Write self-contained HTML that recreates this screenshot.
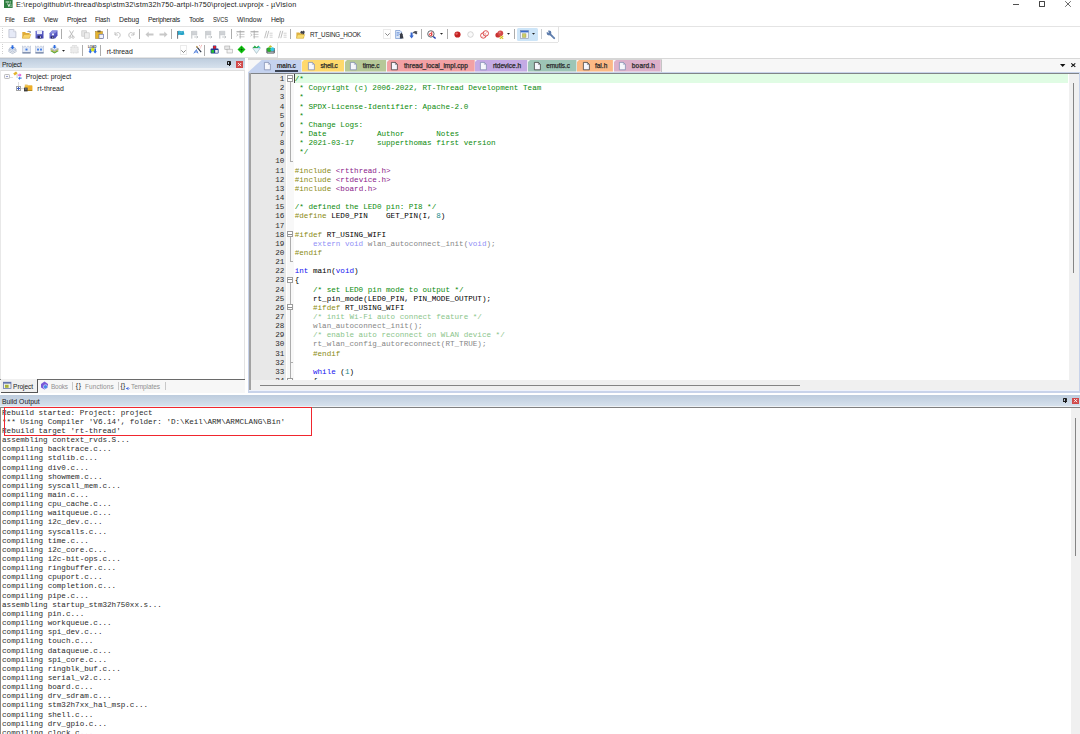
<!DOCTYPE html><html><head><meta charset="utf-8"><title>project.uvprojx - µVision</title><style>
html,body{margin:0;padding:0;}
body{width:1080px;height:734px;overflow:hidden;background:#fff;position:relative;font-family:"Liberation Sans",sans-serif;color:#000;}
.a{position:absolute;}
.ui{position:absolute;font-size:6.9px;line-height:9px;white-space:pre;color:#111;}
.mono{position:absolute;font-family:"Liberation Mono",monospace;font-size:7.619px;line-height:9.1520px;height:9.1520px;white-space:pre;}
.ln{position:absolute;font-family:"Liberation Mono",monospace;font-size:7.619px;line-height:9.1520px;height:9.1520px;color:#2a2a2a;text-align:right;width:30px;}
.c{color:#0b8a0b}.p{color:#8a8a12}.s{color:#8a1a8a}.k{color:#1414f0}.n{color:#148a8a}.d{opacity:.5}
.hdr{position:absolute;background:linear-gradient(#bdccdd,#d6e1ed);}
.tab{position:absolute;top:60px;height:12px;}
.tabt{position:absolute;font-size:6.6px;line-height:9px;top:61.5px;white-space:pre;color:#222;font-weight:bold;letter-spacing:-0.1px}
svg{position:absolute;overflow:visible}
</style></head><body>
<svg style="left:4.4px;top:-0.5px" width="8.6" height="8" viewBox="0 0 8.6 8"><rect width="8.6" height="8" fill="#2f7f41"/><path d="M1.6 1.6h3.4v1h-3.4z" fill="#dcecdc"/><path d="M5.6 1.4h1.4v1.2h-1.4z" fill="#cfe4cf"/><path d="M3.6 3.6l1.3 3l1.2-3" fill="none" stroke="#f2f8f2" stroke-width="0.9"/><path d="M6.4 5h1.3M6.4 6.6h1.3" stroke="#e0eee0" stroke-width="0.7"/></svg>
<div class="ui" style="left:16.00px;top:0.10px;font-size:7.30px;letter-spacing:0.202px;color:#1a1a1a;">E:\repo\github\rt-thread\bsp\stm32\stm32h750-artpi-h750\project.uvprojx - µVision</div>
<div class="a" style="left:1013.00px;top:4.10px;width:6.00px;height:0.80px;background:#505050;"></div>
<div class="a" style="left:1038.9px;top:1.1px;width:5.9px;height:5.8px;border:0.8px solid #444;box-sizing:border-box;border-radius:0.4px"></div>
<svg style="left:1065px;top:1.1px" width="6" height="6" viewBox="0 0 6 6"><path d="M0.2 0.2L5.8 5.8M5.8 0.2L0.2 5.8" stroke="#444" stroke-width="0.8" fill="none"/></svg>
<div class="ui" style="left:4.80px;top:14.90px;font-size:6.90px;letter-spacing:-0.220px;color:#1a1a1a;transform:scaleX(0.9275);transform-origin:0 0;">File</div>
<div class="ui" style="left:23.60px;top:14.90px;font-size:6.90px;letter-spacing:-0.163px;color:#1a1a1a;">Edit</div>
<div class="ui" style="left:43.60px;top:14.90px;font-size:6.90px;letter-spacing:-0.144px;color:#1a1a1a;">View</div>
<div class="ui" style="left:66.70px;top:14.90px;font-size:6.90px;letter-spacing:-0.220px;color:#1a1a1a;transform:scaleX(0.9774);transform-origin:0 0;">Project</div>
<div class="ui" style="left:95.00px;top:14.90px;font-size:6.90px;letter-spacing:-0.220px;color:#1a1a1a;transform:scaleX(0.9379);transform-origin:0 0;">Flash</div>
<div class="ui" style="left:119.00px;top:14.90px;font-size:6.90px;letter-spacing:-0.083px;color:#1a1a1a;">Debug</div>
<div class="ui" style="left:147.80px;top:14.90px;font-size:6.90px;letter-spacing:-0.220px;color:#1a1a1a;transform:scaleX(0.9847);transform-origin:0 0;">Peripherals</div>
<div class="ui" style="left:189.00px;top:14.90px;font-size:6.90px;letter-spacing:-0.220px;color:#1a1a1a;transform:scaleX(0.9850);transform-origin:0 0;">Tools</div>
<div class="ui" style="left:213.00px;top:14.90px;font-size:6.90px;letter-spacing:-0.220px;color:#1a1a1a;transform:scaleX(0.8274);transform-origin:0 0;">SVCS</div>
<div class="ui" style="left:237.10px;top:14.90px;font-size:6.90px;letter-spacing:0.012px;color:#1a1a1a;">Window</div>
<div class="ui" style="left:270.80px;top:14.90px;font-size:6.90px;letter-spacing:-0.220px;color:#1a1a1a;transform:scaleX(0.9903);transform-origin:0 0;">Help</div>
<div class="a" style="left:0.00px;top:25.80px;width:1080.00px;height:1.00px;background:#e4e4e4;"></div>
<div class="a" style="left:0.00px;top:41.50px;width:558.00px;height:1.00px;background:#e4e4e4;"></div>
<div class="a" style="left:557.50px;top:26.00px;width:1.00px;height:16.00px;background:#e2e2e2;"></div>
<div class="a" style="left:0.00px;top:57.30px;width:277.50px;height:1.00px;background:#e4e4e4;"></div>
<div class="a" style="left:276.80px;top:42.00px;width:1.00px;height:16.00px;background:#e0e0e0;"></div>
<div class="a" style="left:2.10px;top:28.00px;width:0.80px;height:0.80px;background:#cfcfcf;"></div>
<div class="a" style="left:2.10px;top:30.20px;width:0.80px;height:0.80px;background:#cfcfcf;"></div>
<div class="a" style="left:2.10px;top:32.40px;width:0.80px;height:0.80px;background:#cfcfcf;"></div>
<div class="a" style="left:2.10px;top:34.60px;width:0.80px;height:0.80px;background:#cfcfcf;"></div>
<div class="a" style="left:2.10px;top:36.80px;width:0.80px;height:0.80px;background:#cfcfcf;"></div>
<div class="a" style="left:2.10px;top:44.00px;width:0.80px;height:0.80px;background:#cfcfcf;"></div>
<div class="a" style="left:2.10px;top:46.20px;width:0.80px;height:0.80px;background:#cfcfcf;"></div>
<div class="a" style="left:2.10px;top:48.40px;width:0.80px;height:0.80px;background:#cfcfcf;"></div>
<div class="a" style="left:2.10px;top:50.60px;width:0.80px;height:0.80px;background:#cfcfcf;"></div>
<div class="a" style="left:2.10px;top:52.80px;width:0.80px;height:0.80px;background:#cfcfcf;"></div>
<svg style="left:7.5px;top:29.4px" width="9" height="9" viewBox="0 0 9 9"><path d="M0.9 0.5h4.8l2.2 2.2v5.9h-7z" fill="#e6eaf7" stroke="#b4b9c8" stroke-width="0.7"/><path d="M5.7 0.5v2.2h2.2" fill="#f8f9fd" stroke="#b4b9c8" stroke-width="0.5"/></svg>
<svg style="left:21.5px;top:29.7px" width="9" height="9" viewBox="0 0 9 9"><path d="M0.3 2h2.8l0.9 0.9h3.6v5.3h-7.3z" fill="#e2ac38"/><path d="M1.9 4.4h7l-1.5 3.9h-7.1z" fill="#f8d468" stroke="#c8982a" stroke-width="0.4"/><path d="M5.2 1.6c0.8-1.2 2.4-1.3 3.2-0.2l0.6-0.5v1.9h-1.9l0.6-0.6c-0.5-0.6-1.3-0.5-1.7 0z" fill="#7c8cb0"/></svg>
<svg style="left:34.9px;top:29.7px" width="9" height="9" viewBox="0 0 9 9"><defs><linearGradient id="sv" x1="0" y1="0" x2="1" y2="1"><stop offset="0" stop-color="#8084dc"/><stop offset="1" stop-color="#3c3cae"/></linearGradient></defs><rect x="0.5" y="0.7" width="8" height="7.8" rx="0.5" fill="url(#sv)"/><rect x="2" y="1" width="5" height="3.1" fill="#eceefa"/><rect x="2.6" y="5.7" width="3.8" height="2.8" fill="#24245a"/><rect x="4.9" y="6.2" width="1" height="1.9" fill="#c8c8e0"/></svg>
<svg style="left:48.5px;top:29.7px" width="9" height="9" viewBox="0 0 9 9"><path d="M0.5 3.2l2.6-2.6h5.4v5l-2.4 2.9h-5.6z" fill="url(#sv)"/><path d="M0.5 3.2l2.6-2.6h5.4l-2.4 2.6z" fill="#8a8ee0"/><path d="M3 3.6h2v1.6h-2z" fill="#eceefa"/><rect x="1.8" y="6.3" width="3" height="2.2" fill="#24245a"/><rect x="3.4" y="6.7" width="0.8" height="1.5" fill="#c8c8e0"/></svg>
<div class="a" style="left:61.00px;top:28.70px;width:0.90px;height:10.80px;background:#acacac;"></div>
<svg style="left:66.5px;top:29.7px" width="9" height="9" viewBox="0 0 9 9"><path d="M2.5 0.5l3.5 6M6.5 0.5l-3.5 6" stroke="#b8b8b8" stroke-width="0.9" fill="none"/><circle cx="2.9" cy="7.2" r="1.1" fill="none" stroke="#b8b8b8" stroke-width="0.8"/><circle cx="6.1" cy="7.2" r="1.1" fill="none" stroke="#b8b8b8" stroke-width="0.8"/></svg>
<svg style="left:80.5px;top:29.7px" width="9" height="9" viewBox="0 0 9 9"><rect x="0.8" y="0.8" width="4.6" height="5.4" fill="#e6e6e6" stroke="#c0c0c0" stroke-width="0.6"/><rect x="3.6" y="2.8" width="4.6" height="5.4" fill="#eeeeee" stroke="#c0c0c0" stroke-width="0.6"/></svg>
<svg style="left:94.5px;top:29.7px" width="9" height="9" viewBox="0 0 9 9"><rect x="0.6" y="1.5" width="6.8" height="7" fill="#e6b42e" stroke="#a87c14" stroke-width="0.5"/><rect x="2.4" y="0.5" width="3.2" height="1.8" fill="#6a5c40"/><rect x="4" y="4.2" width="4.6" height="4.4" fill="#f0f2fa" stroke="#5060a0" stroke-width="0.6"/></svg>
<div class="a" style="left:107.30px;top:28.70px;width:0.90px;height:10.80px;background:#acacac;"></div>
<svg style="left:113.0px;top:29.7px" width="9" height="9" viewBox="0 0 9 9"><path d="M2 2v3h3" fill="none" stroke="#bdbdbd" stroke-width="0.9"/><path d="M2.2 4.8c1-3 5-3 5 0.2c0 1.6-1 2.6-2.2 3" fill="none" stroke="#bdbdbd" stroke-width="0.9"/></svg>
<svg style="left:126.5px;top:29.7px" width="9" height="9" viewBox="0 0 9 9"><path d="M7 2v3h-3" fill="none" stroke="#bdbdbd" stroke-width="0.9"/><path d="M6.8 4.8c-1-3-5-3-5 0.2c0 1.6 1 2.6 2.2 3" fill="none" stroke="#bdbdbd" stroke-width="0.9"/></svg>
<div class="a" style="left:139.30px;top:28.70px;width:0.90px;height:10.80px;background:#acacac;"></div>
<svg style="left:145.0px;top:29.7px" width="9" height="9" viewBox="0 0 9 9"><path d="M0.5 4.5l3.2-3v1.9h4.8v2.2h-4.8v1.9z" fill="#c8c8c8"/></svg>
<svg style="left:158.5px;top:29.7px" width="9" height="9" viewBox="0 0 9 9"><path d="M8.5 4.5l-3.2-3v1.9h-4.8v2.2h4.8v1.9z" fill="#c8c8c8"/></svg>
<div class="a" style="left:171.30px;top:28.70px;width:0.90px;height:10.80px;background:#acacac;"></div>
<svg style="left:176.4px;top:29.7px" width="9" height="9" viewBox="0 0 9 9"><path d="M1.6 1v7.8" stroke="#5a6068" stroke-width="0.9"/><path d="M2 1.2c1.6-1.4 3 0.8 5.6-0.4l0.8 3.8c-2.6 1.4-4-1-6.4 0.6z" fill="#28a4c8"/><path d="M3 2.2c1.2-0.6 2 0.4 3.4 0" stroke="#8ad4e8" stroke-width="0.6" fill="none"/></svg>
<svg style="left:190.4px;top:29.7px" width="9" height="9" viewBox="0 0 9 9"><path d="M1.8 1v7.6" stroke="#b4b8bc" stroke-width="0.9"/><path d="M2.3 1.2h4.6v3.8h-4.6z" fill="#d0d3d6" stroke="#b8bcc0" stroke-width="0.4"/><path d="M4.2 7h3.6M6.6 5.8l1.4 1.2l-1.4 1.2" stroke="#b0b4b8" stroke-width="0.7" fill="none"/></svg>
<svg style="left:204.4px;top:29.7px" width="9" height="9" viewBox="0 0 9 9"><path d="M1.8 1v7.6" stroke="#b4b8bc" stroke-width="0.9"/><path d="M2.3 1.2h4.6v3.8h-4.6z" fill="#d0d3d6" stroke="#b8bcc0" stroke-width="0.4"/><path d="M4.2 7h3.6M6.6 5.8l1.4 1.2l-1.4 1.2" stroke="#b0b4b8" stroke-width="0.7" fill="none"/></svg>
<svg style="left:217.9px;top:29.7px" width="9" height="9" viewBox="0 0 9 9"><path d="M1.8 1v7.6" stroke="#b4b8bc" stroke-width="0.9"/><path d="M2.3 1.2h4.6v3.8h-4.6z" fill="#d0d3d6" stroke="#b8bcc0" stroke-width="0.4"/><path d="M4.2 7h3.6M6.6 5.8l1.4 1.2l-1.4 1.2" stroke="#b0b4b8" stroke-width="0.7" fill="none"/></svg>
<div class="a" style="left:230.50px;top:28.70px;width:0.90px;height:10.80px;background:#acacac;"></div>
<svg style="left:236.0px;top:29.7px" width="9" height="9" viewBox="0 0 9 9"><path d="M0.5 1.8h8" stroke="#9c9c9c" stroke-width="1"/><path d="M3.4 4.4h5.1M3.4 6.8h5.1" stroke="#bdbdbd" stroke-width="0.8"/><path d="M0.4 3.6l1.8 1.3l-1.8 1.3" stroke="#b4b4b4" stroke-width="0.7" fill="none"/><path d="M4.2 0.4v8.2" stroke="#a4a4a4" stroke-width="0.8"/></svg>
<svg style="left:250.0px;top:29.7px" width="9" height="9" viewBox="0 0 9 9"><path d="M0.5 1.8h8" stroke="#9c9c9c" stroke-width="1"/><path d="M3.4 4.4h5.1M3.4 6.8h5.1" stroke="#bdbdbd" stroke-width="0.8"/><path d="M0.4 3.6l1.8 1.3l-1.8 1.3" stroke="#b4b4b4" stroke-width="0.7" fill="none"/><path d="M4.2 0.4v8.2" stroke="#a4a4a4" stroke-width="0.8"/></svg>
<svg style="left:264.0px;top:29.7px" width="9" height="9" viewBox="0 0 9 9"><path d="M0.6 8.2l2-7.4M2.8 8.2l2-7.4" stroke="#aeaeae" stroke-width="0.8"/><path d="M5.6 3.2h3M5.6 5.2h3M5.6 7.2h3" stroke="#c0c0c0" stroke-width="0.7"/></svg>
<svg style="left:278.0px;top:29.7px" width="9" height="9" viewBox="0 0 9 9"><path d="M0.6 8.2l2-7.4M2.8 8.2l2-7.4" stroke="#aeaeae" stroke-width="0.8"/><path d="M5.6 3.2h3M5.6 5.2h3M5.6 7.2h3" stroke="#c0c0c0" stroke-width="0.7"/></svg>
<div class="a" style="left:290.30px;top:28.70px;width:0.90px;height:10.80px;background:#acacac;"></div>
<svg style="left:295.5px;top:29.7px" width="9" height="9" viewBox="0 0 9 9"><path d="M0.4 2.4h2.8l0.9 0.9h3.9v5h-7.6z" fill="#e0b040"/><path d="M1.6 4.6h7.2l-1.4 3.7h-7z" fill="#f8dc70" stroke="#c8a030" stroke-width="0.4"/><path d="M4.2 2.6l1-1.8l1.2 0.8l1-1.2l1.4 1.4l-0.8 2.4h-1.4l-0.4-1.2l-1 1z" fill="#40404a"/></svg>
<div class="ui" style="left:310.00px;top:30.00px;font-size:6.50px;letter-spacing:-0.220px;color:#1a1a1a;transform:scaleX(0.9647);transform-origin:0 0;">RT_USING_HOOK</div>
<svg style="left:384.5px;top:32.5px" width="5" height="3" viewBox="0 0 5 3"><path d="M0.3 0.3l2.2 2.2l2.2-2.2" fill="none" stroke="#555" stroke-width="0.7"/></svg>
<div class="a" style="left:383.40px;top:28.80px;width:7.40px;height:10.40px;background:transparent;border:0.6px solid #ebebeb;box-sizing:border-box"></div>
<svg style="left:394.8px;top:29.7px" width="9" height="9" viewBox="0 0 9 9"><path d="M0.6 0.5h4.4l1.6 1.6v6.4h-6z" fill="#dce8fa" stroke="#5c84c8" stroke-width="0.6"/><path d="M1.6 2.6h3M1.6 4h3M1.6 5.4h2" stroke="#4878d0" stroke-width="0.6"/><path d="M5 4.2l1.4-1.6l1.2 1.6l0.9 4.2h-3.6z" fill="#3a3e48"/></svg>
<svg style="left:408.5px;top:29.7px" width="9" height="9" viewBox="0 0 9 9"><path d="M1.6 2.6h2v3h1.2l-2.2 2.8l-2.2-2.8h1.2z" fill="#3868d0"/><path d="M3.6 3.4c0.4-2.4 3.4-3.4 5-1.6l-0.8 0.8l0.6 0.6l-1.2 1.4l-1.2-1.2c-0.8-0.4-1.6-0.2-2.4 0z" fill="#4a4e5a"/></svg>
<div class="a" style="left:421.30px;top:28.70px;width:0.90px;height:10.80px;background:#acacac;"></div>
<svg style="left:427.0px;top:29.7px" width="9" height="9" viewBox="0 0 9 9"><path d="M6 6.2l2.6 2.4" stroke="#2038b0" stroke-width="1.4"/><circle cx="3.9" cy="3.9" r="3.2" fill="#fff" stroke="#505860" stroke-width="0.9"/><circle cx="3.5" cy="4.5" r="1.1" fill="none" stroke="#e01818" stroke-width="0.9"/><path d="M4.8 1.6v4.2" stroke="#e01818" stroke-width="0.9"/></svg>
<svg style="left:439.5px;top:33px" width="3" height="2" viewBox="0 0 3 2"><path d="M0 0h3l-1.5 1.8z" fill="#222"/></svg>
<div class="a" style="left:447.30px;top:28.70px;width:0.90px;height:10.80px;background:#acacac;"></div>
<svg style="left:452.8px;top:29.7px" width="9" height="9" viewBox="0 0 9 9"><circle cx="4.5" cy="4.5" r="3.1" fill="#c42222"/><circle cx="3.6" cy="3.6" r="1.2" fill="#e06464"/></svg>
<svg style="left:466.1px;top:29.7px" width="9" height="9" viewBox="0 0 9 9"><circle cx="4.5" cy="4.5" r="2.8" fill="#fafafa" stroke="#c4c4c4" stroke-width="0.7"/></svg>
<svg style="left:480.1px;top:29.7px" width="9" height="9" viewBox="0 0 9 9"><circle cx="3.3" cy="5.5" r="2.7" fill="#fff" stroke="#d42424" stroke-width="0.8"/><circle cx="5.8" cy="3.4" r="2.7" fill="#fff" fill-opacity="0.6" stroke="#d42424" stroke-width="0.8"/><path d="M2 7.4l5.4-5.8" stroke="#e89090" stroke-width="0.5"/></svg>
<svg style="left:494.5px;top:29.7px" width="9" height="9" viewBox="0 0 9 9"><circle cx="3" cy="5" r="2.6" fill="#c83030"/><circle cx="5.4" cy="3.2" r="2.8" fill="#d44a4a"/><circle cx="4.8" cy="2.6" r="1" fill="#e88080"/><path d="M4.8 5.8l3.4 3M8.2 5.8l-3.4 3" stroke="#d8c020" stroke-width="1.1"/></svg>
<svg style="left:507px;top:33px" width="3" height="2" viewBox="0 0 3 2"><path d="M0 0h3l-1.5 1.8z" fill="#222"/></svg>
<div class="a" style="left:514.30px;top:28.70px;width:0.90px;height:10.80px;background:#acacac;"></div>
<div class="a" style="left:517.00px;top:27.80px;width:21.30px;height:12.80px;background:#cde5f8;border-radius:1.5px"></div>
<svg style="left:520.1px;top:29.7px" width="9" height="9" viewBox="0 0 9 9"><rect x="0.5" y="0.6" width="8" height="7.8" fill="#f4f6fa" stroke="#8890a8" stroke-width="0.6"/><rect x="0.5" y="0.6" width="8" height="1.8" fill="#3a6cc8"/><rect x="2.4" y="3.8" width="3.6" height="3.6" fill="#cccc64" stroke="#8c9048" stroke-width="0.4"/></svg>
<svg style="left:532px;top:33px" width="3" height="2" viewBox="0 0 3 2"><path d="M0 0h3l-1.5 1.8z" fill="#222"/></svg>
<div class="a" style="left:540.60px;top:28.70px;width:0.90px;height:10.80px;background:#c8ccd0;"></div>
<svg style="left:545.7px;top:29.7px" width="9" height="9" viewBox="0 0 9 9"><path d="M8.2 8.2l-4.4-4.4" stroke="#5c7cac" stroke-width="1.9" stroke-linecap="round"/><circle cx="3" cy="3" r="2.4" fill="#5c7cac"/><path d="M3 3l-3.2-1.6l1.6-1.8z" fill="#fff"/><path d="M7 6.2l1.2 1.2" stroke="#a8bcd8" stroke-width="0.6"/></svg>
<svg style="left:7.7px;top:45.2px" width="9" height="9" viewBox="0 0 9 9"><path d="M0.4 5l4-2l4.2 2l-4.1 2.2z" fill="#dfe6f0" stroke="#8c9ab4" stroke-width="0.5"/><path d="M0.4 6.4l4.1 2.2l4.1-2.2" fill="none" stroke="#8c9ab4" stroke-width="0.6"/><path d="M1.2 3.4l3.2-1.6l3.4 1.6l-3.3 1.8z" fill="#f0f4fa" stroke="#98a6c0" stroke-width="0.5"/><path d="M3.6 0.2h1.8v2h1.2l-2.1 2.2l-2.1-2.2h1.2z" fill="#2c6ce0"/></svg>
<svg style="left:21.7px;top:45.2px" width="9" height="9" viewBox="0 0 9 9"><path d="M0.5 0.8l1.2 1.6l1.3-1.6l1.5 1.6l1.5-1.6l1.3 1.6l1.2-1.6v7.4h-8z" fill="#e4eaf4" stroke="#a8b4cc" stroke-width="0.5"/><rect x="0.5" y="7.2" width="8" height="1.2" fill="#7080a4"/><rect x="3.5" y="3.6" width="2" height="1.9" fill="#3a78e8"/></svg>
<svg style="left:35.1px;top:45.2px" width="9" height="9" viewBox="0 0 9 9"><path d="M0.5 0.8l1.2 1.6l1.3-1.6l1.5 1.6l1.5-1.6l1.3 1.6l1.2-1.6v7.4h-8z" fill="#e4eaf4" stroke="#a8b4cc" stroke-width="0.5"/><rect x="0.5" y="7.2" width="8" height="1.2" fill="#7080a4"/><rect x="2.1" y="3.6" width="1.8" height="1.9" fill="#3a78e8"/><rect x="5.1" y="3.6" width="1.8" height="1.9" fill="#3a78e8"/></svg>
<svg style="left:49.5px;top:45.2px" width="9" height="9" viewBox="0 0 9 9"><path d="M0.3 6l4.2-2.2l4.2 2.2l-4.2 2.6z" fill="#48a038"/><path d="M0.3 5l4.2-2.2l4.2 2.2l-4.2 2.6z" fill="#d8d038"/><path d="M0.3 4l4.2-2.2l4.2 2.2l-4.2 2.6z" fill="#b8c0c8" stroke="#7c8894" stroke-width="0.4"/><path d="M1.6 3l3-1.6l3 1.6l-3 1.8z" fill="#eef2f6"/><path d="M3.7 0h1.7v1.8h1.1l-1.95 2l-1.95-2h1.1z" fill="#2c6ce0"/></svg>
<svg style="left:61.5px;top:49.5px" width="3" height="2" viewBox="0 0 3 2"><path d="M0 0h3l-1.5 1.8z" fill="#222"/></svg>
<svg style="left:69.5px;top:45.2px" width="9" height="9" viewBox="0 0 9 9"><rect x="0.8" y="2" width="7.4" height="6" fill="#ececec" stroke="#c4c4c4" stroke-width="0.6" stroke-dasharray="1 0.6"/><path d="M2 0.8h5" stroke="#c4c4c4" stroke-width="0.7"/></svg>
<div class="a" style="left:82.00px;top:44.90px;width:0.90px;height:10.80px;background:#acacac;"></div>
<svg style="left:88.3px;top:45.4px" width="9.4" height="9" viewBox="0 0 9.4 9"><text x="0" y="2.6" style="font:bold 3.1px &quot;Liberation Sans&quot;,sans-serif;letter-spacing:-0.1px" fill="#3a3e48">LOAD</text><path d="M1.4 3.4h1.8v2.8h1l-1.9 2.4l-1.9-2.4h1z" fill="#2c6ce0"/><path d="M6.2 3.4h1.8v2.8h1l-1.9 2.4l-1.9-2.4h1z" fill="#2c6ce0"/><circle cx="4.7" cy="4.6" r="1.9" fill="#d4e01c"/></svg>
<div class="a" style="left:100.30px;top:44.90px;width:0.90px;height:10.80px;background:#acacac;"></div>
<div class="ui" style="left:106.80px;top:46.70px;font-size:6.80px;letter-spacing:0.025px;color:#1a1a1a;">rt-thread</div>
<div class="a" style="left:180.30px;top:44.60px;width:7.20px;height:10.60px;background:transparent;border:0.6px solid #ebebeb;box-sizing:border-box"></div>
<svg style="left:181px;top:49.5px" width="5" height="3" viewBox="0 0 5 3"><path d="M0.3 0.3l2.2 2.2l2.2-2.2" fill="none" stroke="#555" stroke-width="0.7"/></svg>
<svg style="left:192.5px;top:45.4px" width="9" height="9" viewBox="0 0 9 9"><path d="M3.6 1.6l4.6 5.6" stroke="#2c3444" stroke-width="1.1"/><path d="M3.4 1.2l1.2 1.4" stroke="#c8a050" stroke-width="1.2"/><path d="M3.6 4.4l-2.8 4M3.4 5l1.6 3.4M1.6 7h3" stroke="#4878d8" stroke-width="0.9" fill="none"/><path d="M6 0.6h0.7M7.6 1.8h0.7M6.8 3h0.6M8.2 0.4h0.6" stroke="#e04848" stroke-width="0.7"/></svg>
<div class="a" style="left:204.30px;top:44.90px;width:0.90px;height:10.80px;background:#acacac;"></div>
<svg style="left:210.3px;top:45.4px" width="9" height="9" viewBox="0 0 9 9"><rect x="0.6" y="3.6" width="8" height="4.9" rx="0.8" fill="#203c90"/><rect x="2.9" y="0.4" width="3.4" height="3.6" rx="0.5" fill="#203c90"/><rect x="3.4" y="1" width="2.4" height="2.6" fill="#e81c24"/><rect x="1.4" y="5" width="2.6" height="2.8" fill="#28c030"/><rect x="5.2" y="5" width="2.6" height="2.8" fill="#f0f0f4"/></svg>
<svg style="left:224.0px;top:45.2px" width="9" height="9" viewBox="0 0 9 9"><rect x="0.8" y="1" width="5" height="3.6" fill="#e8e8e8" stroke="#a8a8a8" stroke-width="0.6"/><rect x="3" y="4.2" width="5.4" height="3.8" fill="#f4f4f4" stroke="#a8a8a8" stroke-width="0.6"/></svg>
<svg style="left:237.3px;top:45.4px" width="9" height="9" viewBox="0 0 9 9"><path d="M4.5 0.5l4 4l-4 4l-4-4z" fill="#10c010"/><path d="M4.5 2.2v4.6M2.2 4.5h4.6" stroke="#087008" stroke-width="0.7" stroke-dasharray="0.8 0.6"/><circle cx="4.5" cy="4.5" r="0.8" fill="#065806"/></svg>
<svg style="left:251.8px;top:45.4px" width="9" height="9" viewBox="0 0 9 9"><path d="M0.6 2.9h7.8l-3.9 5.6z" fill="#dff4fa" stroke="#8ca0a8" stroke-width="0.5"/><path d="M0.6 2.9l2.2-2.3l1.7 1.6l1.9-1.6l2 2.3z" fill="#28a848"/><path d="M5.6 2.4l1.4-1.2l1.4 1.7h-2z" fill="#48c8e0"/></svg>
<svg style="left:265.9px;top:45.4px" width="9" height="9" viewBox="0 0 9 9"><rect x="0.4" y="3" width="8.4" height="5.4" rx="0.8" fill="#4a5058"/><rect x="1.4" y="6.6" width="6.4" height="1" fill="#d8dce0"/><circle cx="3.2" cy="4.6" r="2.3" fill="#28b028"/><circle cx="6.4" cy="4.2" r="2" fill="#38c8e0"/><path d="M2.6 1.6l1.8-1.4l1.8 1.4l-1.8 1z" fill="#c8c030"/></svg>
<div class="hdr" style="left:0;top:58.2px;width:244.7px;height:10px"></div>
<div class="a" style="left:0.00px;top:57.90px;width:244.70px;height:0.60px;background:#b8c3d0;"></div>
<div class="ui" style="left:1.90px;top:59.50px;font-size:6.80px;letter-spacing:-0.220px;color:#1a1a1a;transform:scaleX(0.9978);transform-origin:0 0;">Project</div>
<div class="a" style="left:236.20px;top:60.80px;width:6.80px;height:6.80px;background:#d04a4a;"></div>
<svg style="left:238px;top:62.6px" width="3.2" height="3.2" viewBox="0 0 4 4"><path d="M0 0L4 4M4 0L0 4" stroke="#fff" stroke-width="1.1"/></svg>
<div class="a" style="left:227.20px;top:61.40px;width:3.40px;height:3.20px;background:#1a1a1a;border-radius:0.8px"></div>
<div class="a" style="left:228.00px;top:61.90px;width:0.80px;height:2.30px;background:#b8c4d4;"></div>
<div class="a" style="left:226.80px;top:64.20px;width:4.20px;height:0.80px;background:#1a1a1a;"></div>
<div class="a" style="left:228.50px;top:64.80px;width:0.90px;height:1.50px;background:#1a1a1a;"></div>
<div class="a" style="left:0.00px;top:68.20px;width:244.70px;height:1.60px;background:#eef1f5;"></div>
<div class="a" style="left:0;top:69.8px;width:244.8px;height:309.2px;border-top:1px solid #dedede;border-right:1px solid #e3e3e3;border-left:0.8px solid #e8e8e8;box-sizing:border-box"></div>
<div class="a" style="left:4.3px;top:74.3px;width:5.4px;height:5.2px;border:0.8px solid #bcbcbc;box-sizing:border-box;border-radius:1.2px;background:#f8f8fa"></div>
<div class="a" style="left:5.80px;top:76.40px;width:2.40px;height:0.80px;background:#98a0d0;"></div>
<svg style="left:12.5px;top:70.8px" width="9" height="9" viewBox="0 0 9 9"><path d="M0.2 2.6l2.8-2.2l1.6 1.8l-2.8 2.2z" fill="#e4b42c"/><path d="M4.1 3v4" stroke="#b8c0cc" stroke-width="0.8"/><path d="M5 3.5h1.6v-1.2l2 1.8l-2 1.8v-1.2h-1.6z" fill="#e060d8"/><path d="M8.6 6.6h-1.6v-1.2l-2 1.8l2 1.8v-1.2h1.6z" fill="#3a80e8"/></svg>
<div class="ui" style="left:25.80px;top:72.30px;font-size:6.90px;letter-spacing:-0.035px;color:#1a1a1a;">Project: project</div>
<div class="a" style="left:18.20px;top:82.00px;width:0.60px;height:4.00px;background:#dcdcdc;"></div>
<div class="a" style="left:21.00px;top:88.00px;width:3.00px;height:0.60px;background:#dcdcdc;"></div>
<div class="a" style="left:10.00px;top:76.60px;width:3.00px;height:0.60px;background:#e0e0e0;"></div>
<div class="a" style="left:16px;top:85.9px;width:4.8px;height:4.8px;border:0.7px solid #a4a4a4;box-sizing:border-box;background:#fff"></div>
<div class="a" style="left:17.10px;top:88.00px;width:2.60px;height:0.60px;background:#4060c0;"></div>
<div class="a" style="left:18.10px;top:87.00px;width:0.60px;height:2.60px;background:#4060c0;"></div>
<svg style="left:24.1px;top:83.8px" width="8.6" height="7.6" viewBox="0 0 8.6 7.6"><path d="M0.8 0.4h2.6l0.8 0.9h4v5.4h-7.4z" fill="#e8c468"/><path d="M0.8 1.8h7.4v4.9h-7.4z" fill="#f2bc38"/><path d="M4.5 1.8h3.7v4.9h-3.7z" fill="#eeae28"/><path d="M0.8 6.2h7.4v0.6h-7.4z" fill="#8a6a10"/><path d="M0 3.6h3.6v3.8h-3.6z" fill="#3c3c3c"/><path d="M0.8 4.4h2M0.8 5.6h2" stroke="#999" stroke-width="0.5"/></svg>
<div class="ui" style="left:37.30px;top:84.00px;font-size:6.90px;letter-spacing:0.053px;color:#1a1a1a;">rt-thread</div>
<div class="a" style="left:0.00px;top:379.80px;width:245.00px;height:13.00px;background:#f7f7f7;"></div>
<div class="a" style="left:37.50px;top:379.00px;width:207.50px;height:1.00px;background:#6a6a6a;"></div>
<div class="a" style="left:0.00px;top:379.00px;width:1.00px;height:1.00px;background:#888;"></div>
<div class="a" style="left:0.8px;top:379px;width:37.2px;height:13.6px;background:#f0f0f0;border-right:1px solid #555;border-bottom:1px solid #555;box-sizing:border-box"></div>
<svg style="left:2.7px;top:381.2px" width="8.6" height="8.6" viewBox="0 0 8.6 8.6"><rect x="0.6" y="1.2" width="7.4" height="6.4" fill="#eef2e4" stroke="#5868a8" stroke-width="0.7"/><rect x="0.6" y="1.2" width="7.4" height="1.4" fill="#5868a8"/><rect x="2" y="3.8" width="3.6" height="3" fill="#a8b038"/></svg>
<div class="ui" style="left:13.10px;top:381.70px;font-size:6.60px;letter-spacing:-0.090px;color:#1a1a1a;">Project</div>
<svg style="left:40.0px;top:381.0px" width="9" height="9" viewBox="0 0 9 9"><path d="M1 3l3.5-2.5l3.5 2.5v3.5l-3.5 2l-3.5-2z" fill="#7858d8"/><circle cx="5.5" cy="5.8" r="2.1" fill="#4888e8" stroke="#fff" stroke-width="0.5"/></svg>
<div class="ui" style="left:50.60px;top:381.70px;font-size:6.50px;letter-spacing:-0.220px;color:#909090;transform:scaleX(0.9834);transform-origin:0 0;">Books</div>
<div class="a" style="left:72.30px;top:381.50px;width:0.70px;height:8.50px;background:#c8c8c8;"></div>
<div class="ui" style="left:75.8px;top:381.3px;font-size:6.8px;color:#222;letter-spacing:0.8px">{}</div>
<div class="ui" style="left:85.00px;top:381.70px;font-size:6.50px;letter-spacing:0.065px;color:#909090;">Functions</div>
<div class="a" style="left:117.60px;top:381.50px;width:0.70px;height:8.50px;background:#c8c8c8;"></div>
<div class="ui" style="left:120.5px;top:381.3px;font-size:6.8px;color:#222;letter-spacing:0.2px">{}</div>
<svg style="left:126.1px;top:386.5px" width="3" height="3" viewBox="0 0 3 3"><path d="M0 1.5h2M1.5 0l1.5 1.5l-1.5 1.5" stroke="#2050e0" stroke-width="0.8" fill="none"/></svg>
<div class="ui" style="left:131.00px;top:381.70px;font-size:6.50px;letter-spacing:-0.078px;color:#909090;">Templates</div>
<div class="a" style="left:164.50px;top:381.50px;width:0.70px;height:8.50px;background:#c8c8c8;"></div>
<div class="a" style="left:247.60px;top:58.20px;width:832.40px;height:13.60px;background:#f7f7f7;"></div>
<div class="a" style="left:247.60px;top:58.20px;width:832.40px;height:0.80px;background:#d8d8d8;"></div>
<div class="a" style="left:247.60px;top:58.20px;width:414.00px;height:2.10px;background:#d6d6d6;"></div>
<div class="a" style="left:247.60px;top:71.50px;width:832.40px;height:321.30px;background:#c8d3ea;"></div>
<svg style="left:249.6px;top:60.3px" width="51.4" height="12.6" viewBox="0 0 51.4 12.6"><path d="M-2 12.6L-1.2 11.4L11.6 0H51.4V12.6z" fill="#c4d2ef"/></svg>
<svg style="left:264.2px;top:61.6px" width="6.8" height="8.2" viewBox="0 0 6.8 8.2"><path d="M0.4 0.4h4l2 2v5.4h-6z" fill="#f6f7fc" stroke="#7f8cb0" stroke-width="0.75"/><path d="M4.4 0.4v2h2" fill="none" stroke="#7f8cb0" stroke-width="0.5"/></svg>
<div class="ui" style="left:276.70px;top:61.30px;font-size:6.50px;letter-spacing:-0.218px;color:#2a2a2a;font-weight:bold;">main.c</div>
<svg style="left:302.0px;top:60.3px" width="42.0" height="11.4" viewBox="0 0 42.0 11.4"><path d="M0 11.4V2L2 0H42.0V11.4z" fill="#ffd96c"/></svg>
<svg style="left:307.6px;top:61.6px" width="6.8" height="8.2" viewBox="0 0 6.8 8.2"><path d="M0.4 0.4h4l2 2v5.4h-6z" fill="#f6f7fc" stroke="#7f8cb0" stroke-width="0.75"/><path d="M4.4 0.4v2h2" fill="none" stroke="#7f8cb0" stroke-width="0.5"/></svg>
<div class="ui" style="left:320.40px;top:61.30px;font-size:6.50px;letter-spacing:-0.171px;color:#1a1a1a;-webkit-text-stroke:0.25px #333;">shell.c</div>
<svg style="left:344.7px;top:60.3px" width="41.1" height="11.4" viewBox="0 0 41.1 11.4"><path d="M0 11.4V2L2 0H41.1V11.4z" fill="#b6c898"/></svg>
<svg style="left:350.2px;top:61.6px" width="6.8" height="8.2" viewBox="0 0 6.8 8.2"><path d="M0.4 0.4h4l2 2v5.4h-6z" fill="#f6f7fc" stroke="#7f8cb0" stroke-width="0.75"/><path d="M4.4 0.4v2h2" fill="none" stroke="#7f8cb0" stroke-width="0.5"/></svg>
<div class="ui" style="left:362.70px;top:61.30px;font-size:6.50px;letter-spacing:-0.087px;color:#1a1a1a;-webkit-text-stroke:0.25px #333;">time.c</div>
<svg style="left:386.6px;top:60.3px" width="87.7" height="11.4" viewBox="0 0 87.7 11.4"><path d="M0 11.4V2L2 0H87.7V11.4z" fill="#f2a1a4"/></svg>
<svg style="left:391.2px;top:61.6px" width="6.8" height="8.2" viewBox="0 0 6.8 8.2"><path d="M0.4 0.4h4l2 2v5.4h-6z" fill="#f6f7fc" stroke="#3a3a3a" stroke-width="0.75"/><path d="M4.4 0.4v2h2" fill="none" stroke="#3a3a3a" stroke-width="0.5"/></svg>
<div class="ui" style="left:404.00px;top:61.30px;font-size:6.50px;letter-spacing:0.028px;color:#1a1a1a;-webkit-text-stroke:0.25px #333;">thread_local_impl.cpp</div>
<svg style="left:475.1px;top:60.3px" width="52.2" height="11.4" viewBox="0 0 52.2 11.4"><path d="M0 11.4V2L2 0H52.2V11.4z" fill="#c4aae4"/></svg>
<svg style="left:480.3px;top:61.6px" width="6.8" height="8.2" viewBox="0 0 6.8 8.2"><path d="M0.4 0.4h4l2 2v5.4h-6z" fill="#f6f7fc" stroke="#7f8cb0" stroke-width="0.75"/><path d="M4.4 0.4v2h2" fill="none" stroke="#7f8cb0" stroke-width="0.5"/></svg>
<div class="ui" style="left:492.90px;top:61.30px;font-size:6.50px;letter-spacing:0.002px;color:#1a1a1a;-webkit-text-stroke:0.25px #333;">rtdevice.h</div>
<svg style="left:528.2px;top:60.3px" width="48.4" height="11.4" viewBox="0 0 48.4 11.4"><path d="M0 11.4V2L2 0H48.4V11.4z" fill="#9dc5b6"/></svg>
<svg style="left:533.5px;top:61.6px" width="6.8" height="8.2" viewBox="0 0 6.8 8.2"><path d="M0.4 0.4h4l2 2v5.4h-6z" fill="#f6f7fc" stroke="#3a3a3a" stroke-width="0.75"/><path d="M4.4 0.4v2h2" fill="none" stroke="#3a3a3a" stroke-width="0.5"/></svg>
<div class="ui" style="left:546.20px;top:61.30px;font-size:6.50px;letter-spacing:-0.057px;color:#1a1a1a;-webkit-text-stroke:0.25px #333;">emutls.c</div>
<svg style="left:577.3px;top:60.3px" width="35.9" height="11.4" viewBox="0 0 35.9 11.4"><path d="M0 11.4V2L2 0H35.9V11.4z" fill="#fbb985"/></svg>
<svg style="left:582.5px;top:61.6px" width="6.8" height="8.2" viewBox="0 0 6.8 8.2"><path d="M0.4 0.4h4l2 2v5.4h-6z" fill="#f6f7fc" stroke="#3a3a3a" stroke-width="0.75"/><path d="M4.4 0.4v2h2" fill="none" stroke="#3a3a3a" stroke-width="0.5"/></svg>
<div class="ui" style="left:594.90px;top:61.30px;font-size:6.50px;letter-spacing:0.029px;color:#1a1a1a;-webkit-text-stroke:0.25px #333;">fal.h</div>
<svg style="left:613.9px;top:60.3px" width="46.7" height="11.4" viewBox="0 0 46.7 11.4"><path d="M0 11.4V2L2 0H46.7V11.4z" fill="#dcb0ca"/></svg>
<svg style="left:619.1px;top:61.6px" width="6.8" height="8.2" viewBox="0 0 6.8 8.2"><path d="M0.4 0.4h4l2 2v5.4h-6z" fill="#f6f7fc" stroke="#7f8cb0" stroke-width="0.75"/><path d="M4.4 0.4v2h2" fill="none" stroke="#7f8cb0" stroke-width="0.5"/></svg>
<div class="ui" style="left:631.80px;top:61.30px;font-size:6.50px;letter-spacing:0.176px;color:#1a1a1a;-webkit-text-stroke:0.25px #333;">board.h</div>
<div class="a" style="left:660.50px;top:60.30px;width:1.00px;height:11.30px;background:#c4c4c4;"></div>
<div class="a" style="left:274.70px;top:70.20px;width:23.50px;height:1.40px;background:#3a4252;"></div>
<svg style="left:1059.8px;top:64px" width="5.4" height="2.9" viewBox="0 0 5.4 2.9"><path d="M0 0h5.4l-2.7 2.9z" fill="#111"/></svg>
<svg style="left:1071.3px;top:62.9px" width="4.6" height="4.2" viewBox="0 0 4.6 4.2"><path d="M0.3 0.3L4.3 3.9M4.3 0.3L0.3 3.9" stroke="#111" stroke-width="1.1"/></svg>
<div class="a" style="left:249.30px;top:72.80px;width:829.40px;height:1.20px;background:#808488;"></div>
<div class="a" style="left:249.30px;top:73.90px;width:829.40px;height:306.40px;background:#fff;"></div>
<div class="a" style="left:249.20px;top:72.80px;width:1.50px;height:317.30px;background:#a2a2a2;"></div>
<div class="a" style="left:250.70px;top:73.90px;width:35.30px;height:306.40px;background:#e8e8e8;"></div>
<div class="a" style="left:286.60px;top:73.90px;width:7.40px;height:306.40px;background:#f8f8f8;"></div>
<div class="a" style="left:294.00px;top:73.90px;width:774.00px;height:8.80px;background:#e0fce4;"></div>
<div class="a" style="left:1068.80px;top:73.90px;width:9.90px;height:306.40px;background:#f0f0f0;"></div>
<div class="a" style="left:1072.90px;top:83.30px;width:1.20px;height:189.30px;background:#848484;"></div>
<div class="a" style="left:250.70px;top:380.30px;width:828.00px;height:9.80px;background:#f0f0f0;"></div>
<div class="a" style="left:249.20px;top:390.10px;width:829.50px;height:1.30px;background:#eef2fb;"></div>
<div class="a" style="left:260.00px;top:384.90px;width:540.00px;height:1.10px;background:#848484;"></div>
<div class="a" style="left:250.7px;top:73.90px;width:800px;height:306.40px;overflow:hidden">
<div class="ln" style="left:3.6px;top:1.10px;">1</div>
<div class="mono" style="left:44px;top:1.10px;"><span class="c">/*</span></div>
<div class="ln" style="left:3.6px;top:10.10px;">2</div>
<div class="mono" style="left:44px;top:10.10px;"><span class="c"> * Copyright (c) 2006-2022, RT-Thread Development Team</span></div>
<div class="ln" style="left:3.6px;top:19.10px;">3</div>
<div class="mono" style="left:44px;top:19.10px;"><span class="c"> *</span></div>
<div class="ln" style="left:3.6px;top:29.10px;">4</div>
<div class="mono" style="left:44px;top:29.10px;"><span class="c"> * SPDX-License-Identifier: Apache-2.0</span></div>
<div class="ln" style="left:3.6px;top:38.10px;">5</div>
<div class="mono" style="left:44px;top:38.10px;"><span class="c"> *</span></div>
<div class="ln" style="left:3.6px;top:47.10px;">6</div>
<div class="mono" style="left:44px;top:47.10px;"><span class="c"> * Change Logs:</span></div>
<div class="ln" style="left:3.6px;top:56.10px;">7</div>
<div class="mono" style="left:44px;top:56.10px;"><span class="c"> * Date           Author       Notes</span></div>
<div class="ln" style="left:3.6px;top:65.10px;">8</div>
<div class="mono" style="left:44px;top:65.10px;"><span class="c"> * 2021-03-17     supperthomas first version</span></div>
<div class="ln" style="left:3.6px;top:74.10px;">9</div>
<div class="mono" style="left:44px;top:74.10px;"><span class="c"> */</span></div>
<div class="ln" style="left:3.6px;top:83.10px;">10</div>
<div class="ln" style="left:3.6px;top:93.10px;">11</div>
<div class="mono" style="left:44px;top:93.10px;"><span class="p">#include </span><span class="s">&lt;rtthread.h&gt;</span></div>
<div class="ln" style="left:3.6px;top:102.10px;">12</div>
<div class="mono" style="left:44px;top:102.10px;"><span class="p">#include </span><span class="s">&lt;rtdevice.h&gt;</span></div>
<div class="ln" style="left:3.6px;top:111.10px;">13</div>
<div class="mono" style="left:44px;top:111.10px;"><span class="p">#include </span><span class="s">&lt;board.h&gt;</span></div>
<div class="ln" style="left:3.6px;top:120.10px;">14</div>
<div class="ln" style="left:3.6px;top:129.10px;">15</div>
<div class="mono" style="left:44px;top:129.10px;"><span class="c">/* defined the LED0 pin: PI8 */</span></div>
<div class="ln" style="left:3.6px;top:138.10px;">16</div>
<div class="mono" style="left:44px;top:138.10px;"><span class="p">#define </span>LED0_PIN    GET_PIN(I, <span class="n">8</span>)</div>
<div class="ln" style="left:3.6px;top:148.10px;">17</div>
<div class="ln" style="left:3.6px;top:157.10px;">18</div>
<div class="mono" style="left:44px;top:157.10px;"><span class="p">#ifdef </span>RT_USING_WIFI</div>
<div class="ln" style="left:3.6px;top:166.10px;">19</div>
<div class="mono" style="left:44px;top:166.10px;">    <span class="k d">extern void</span><span class="d"> wlan_autoconnect_init(</span><span class="k d">void</span><span class="d">);</span></div>
<div class="ln" style="left:3.6px;top:175.10px;">20</div>
<div class="mono" style="left:44px;top:175.10px;"><span class="p">#endif</span></div>
<div class="ln" style="left:3.6px;top:184.10px;">21</div>
<div class="ln" style="left:3.6px;top:193.10px;">22</div>
<div class="mono" style="left:44px;top:193.10px;"><span class="k">int</span> main(<span class="k">void</span>)</div>
<div class="ln" style="left:3.6px;top:202.10px;">23</div>
<div class="mono" style="left:44px;top:202.10px;">{</div>
<div class="ln" style="left:3.6px;top:212.10px;">24</div>
<div class="mono" style="left:44px;top:212.10px;">    <span class="c">/* set LED0 pin mode to output */</span></div>
<div class="ln" style="left:3.6px;top:221.10px;">25</div>
<div class="mono" style="left:44px;top:221.10px;">    rt_pin_mode(LED0_PIN, PIN_MODE_OUTPUT);</div>
<div class="ln" style="left:3.6px;top:230.10px;">26</div>
<div class="mono" style="left:44px;top:230.10px;">    <span class="p">#ifdef </span>RT_USING_WIFI</div>
<div class="ln" style="left:3.6px;top:239.10px;">27</div>
<div class="mono" style="left:44px;top:239.10px;">    <span class="c d">/* init Wi-Fi auto connect feature */</span></div>
<div class="ln" style="left:3.6px;top:248.10px;">28</div>
<div class="mono" style="left:44px;top:248.10px;"><span class="d">    wlan_autoconnect_init();</span></div>
<div class="ln" style="left:3.6px;top:257.10px;">29</div>
<div class="mono" style="left:44px;top:257.10px;">    <span class="c d">/* enable auto reconnect on WLAN device */</span></div>
<div class="ln" style="left:3.6px;top:266.10px;">30</div>
<div class="mono" style="left:44px;top:266.10px;"><span class="d">    rt_wlan_config_autoreconnect(RT_TRUE);</span></div>
<div class="ln" style="left:3.6px;top:276.10px;">31</div>
<div class="mono" style="left:44px;top:276.10px;">    <span class="p">#endif</span></div>
<div class="ln" style="left:3.6px;top:285.10px;">32</div>
<div class="ln" style="left:3.6px;top:294.10px;">33</div>
<div class="mono" style="left:44px;top:294.10px;">    <span class="k">while</span> (<span class="n">1</span>)</div>
<div class="ln" style="left:3.6px;top:303.10px;">34</div>
<div class="mono" style="left:44px;top:303.10px;">    {</div>
</div>
<div class="a" style="left:290.00px;top:81.55px;width:0.70px;height:79.27px;background:#adadad;"></div>
<div class="a" style="left:290.00px;top:160.82px;width:3.00px;height:0.70px;background:#adadad;"></div>
<div class="a" style="left:287.20px;top:75.35px;width:5.8px;height:6.2px;border:0.8px solid #9c9c9c;box-sizing:border-box;background:#fff"></div>
<div class="a" style="left:288.00px;top:78.05px;width:4.20px;height:0.80px;background:#8c8c8c;"></div>
<div class="a" style="left:290.00px;top:237.13px;width:0.70px;height:24.36px;background:#adadad;"></div>
<div class="a" style="left:290.00px;top:261.49px;width:3.00px;height:0.70px;background:#adadad;"></div>
<div class="a" style="left:287.20px;top:230.93px;width:5.8px;height:6.2px;border:0.8px solid #9c9c9c;box-sizing:border-box;background:#fff"></div>
<div class="a" style="left:288.00px;top:233.63px;width:4.20px;height:0.80px;background:#8c8c8c;"></div>
<div class="a" style="left:290.00px;top:282.89px;width:0.70px;height:24.36px;background:#adadad;"></div>
<div class="a" style="left:287.20px;top:276.69px;width:5.8px;height:6.2px;border:0.8px solid #9c9c9c;box-sizing:border-box;background:#fff"></div>
<div class="a" style="left:288.00px;top:279.39px;width:4.20px;height:0.80px;background:#8c8c8c;"></div>
<div class="a" style="left:290.00px;top:310.35px;width:0.70px;height:51.81px;background:#adadad;"></div>
<div class="a" style="left:290.00px;top:362.16px;width:3.00px;height:0.70px;background:#adadad;"></div>
<div class="a" style="left:287.20px;top:304.15px;width:5.8px;height:6.2px;border:0.8px solid #9c9c9c;box-sizing:border-box;background:#fff"></div>
<div class="a" style="left:288.00px;top:306.85px;width:4.20px;height:0.80px;background:#8c8c8c;"></div>
<div class="a" style="left:290.00px;top:362.16px;width:0.70px;height:18.14px;background:#adadad;"></div>
<div class="a" style="left:287.20px;top:377.70px;width:5.8px;height:2.6px;border:0.8px solid #9c9c9c;border-bottom:none;box-sizing:border-box;background:#fff"></div>
<div class="a" style="left:294.10px;top:74.00px;width:1.00px;height:8.70px;background:#404040;"></div>
<div class="hdr" style="left:0;top:395px;width:1080px;height:11.4px"></div>
<div class="a" style="left:0.00px;top:406.20px;width:1080.00px;height:0.80px;background:#eef2f6;"></div>
<div class="ui" style="left:1.90px;top:396.60px;font-size:6.80px;letter-spacing:0.034px;color:#1a1a1a;">Build Output</div>
<div class="a" style="left:1072.20px;top:397.50px;width:6.80px;height:6.80px;background:#d04a4a;"></div>
<svg style="left:1074px;top:399.3px" width="3.2" height="3.2" viewBox="0 0 4 4"><path d="M0 0L4 4M4 0L0 4" stroke="#fff" stroke-width="1.1"/></svg>
<div class="a" style="left:1063.20px;top:398.30px;width:3.40px;height:3.20px;background:#1a1a1a;border-radius:0.8px"></div>
<div class="a" style="left:1064.00px;top:398.80px;width:0.80px;height:2.30px;background:#b8c4d4;"></div>
<div class="a" style="left:1062.80px;top:401.10px;width:4.20px;height:0.80px;background:#1a1a1a;"></div>
<div class="a" style="left:1064.50px;top:401.70px;width:0.90px;height:1.50px;background:#1a1a1a;"></div>
<div class="a" style="left:0.00px;top:407.00px;width:1080.00px;height:0.90px;background:#808080;"></div>
<div class="a" style="left:0.00px;top:407.00px;width:1.00px;height:327.00px;background:#8a8a8a;"></div>
<div class="a" style="left:1071.10px;top:408.00px;width:8.90px;height:326.00px;background:#f0f0f0;"></div>
<div class="a" style="left:1074.80px;top:417.80px;width:1.20px;height:138.70px;background:#848484;"></div>
<div class="mono" style="left:2px;top:409px;color:#2a2a2a">Rebuild started: Project: project</div>
<div class="mono" style="left:2px;top:418px;color:#2a2a2a">*** Using Compiler 'V6.14', folder: 'D:\Keil\ARM\ARMCLANG\Bin'</div>
<div class="mono" style="left:2px;top:427px;color:#2a2a2a">Rebuild target 'rt-thread'</div>
<div class="mono" style="left:2px;top:436px;color:#2a2a2a">assembling context_rvds.S...</div>
<div class="mono" style="left:2px;top:445px;color:#2a2a2a">compiling backtrace.c...</div>
<div class="mono" style="left:2px;top:454px;color:#2a2a2a">compiling stdlib.c...</div>
<div class="mono" style="left:2px;top:464px;color:#2a2a2a">compiling div0.c...</div>
<div class="mono" style="left:2px;top:473px;color:#2a2a2a">compiling showmem.c...</div>
<div class="mono" style="left:2px;top:482px;color:#2a2a2a">compiling syscall_mem.c...</div>
<div class="mono" style="left:2px;top:491px;color:#2a2a2a">compiling main.c...</div>
<div class="mono" style="left:2px;top:500px;color:#2a2a2a">compiling cpu_cache.c...</div>
<div class="mono" style="left:2px;top:509px;color:#2a2a2a">compiling waitqueue.c...</div>
<div class="mono" style="left:2px;top:518px;color:#2a2a2a">compiling i2c_dev.c...</div>
<div class="mono" style="left:2px;top:528px;color:#2a2a2a">compiling syscalls.c...</div>
<div class="mono" style="left:2px;top:537px;color:#2a2a2a">compiling time.c...</div>
<div class="mono" style="left:2px;top:546px;color:#2a2a2a">compiling i2c_core.c...</div>
<div class="mono" style="left:2px;top:555px;color:#2a2a2a">compiling i2c-bit-ops.c...</div>
<div class="mono" style="left:2px;top:564px;color:#2a2a2a">compiling ringbuffer.c...</div>
<div class="mono" style="left:2px;top:573px;color:#2a2a2a">compiling cpuport.c...</div>
<div class="mono" style="left:2px;top:582px;color:#2a2a2a">compiling completion.c...</div>
<div class="mono" style="left:2px;top:592px;color:#2a2a2a">compiling pipe.c...</div>
<div class="mono" style="left:2px;top:601px;color:#2a2a2a">assembling startup_stm32h750xx.s...</div>
<div class="mono" style="left:2px;top:610px;color:#2a2a2a">compiling pin.c...</div>
<div class="mono" style="left:2px;top:619px;color:#2a2a2a">compiling workqueue.c...</div>
<div class="mono" style="left:2px;top:628px;color:#2a2a2a">compiling spi_dev.c...</div>
<div class="mono" style="left:2px;top:637px;color:#2a2a2a">compiling touch.c...</div>
<div class="mono" style="left:2px;top:647px;color:#2a2a2a">compiling dataqueue.c...</div>
<div class="mono" style="left:2px;top:656px;color:#2a2a2a">compiling spi_core.c...</div>
<div class="mono" style="left:2px;top:665px;color:#2a2a2a">compiling ringblk_buf.c...</div>
<div class="mono" style="left:2px;top:674px;color:#2a2a2a">compiling serial_v2.c...</div>
<div class="mono" style="left:2px;top:683px;color:#2a2a2a">compiling board.c...</div>
<div class="mono" style="left:2px;top:692px;color:#2a2a2a">compiling drv_sdram.c...</div>
<div class="mono" style="left:2px;top:701px;color:#2a2a2a">compiling stm32h7xx_hal_msp.c...</div>
<div class="mono" style="left:2px;top:711px;color:#2a2a2a">compiling shell.c...</div>
<div class="mono" style="left:2px;top:720px;color:#2a2a2a">compiling drv_gpio.c...</div>
<div class="mono" style="left:2px;top:729px;color:#2a2a2a">compiling clock.c...</div>
<div class="a" style="left:4px;top:406.8px;width:307.8px;height:29.5px;border:1.4px solid #f0262e;box-sizing:border-box"></div>
</body></html>
